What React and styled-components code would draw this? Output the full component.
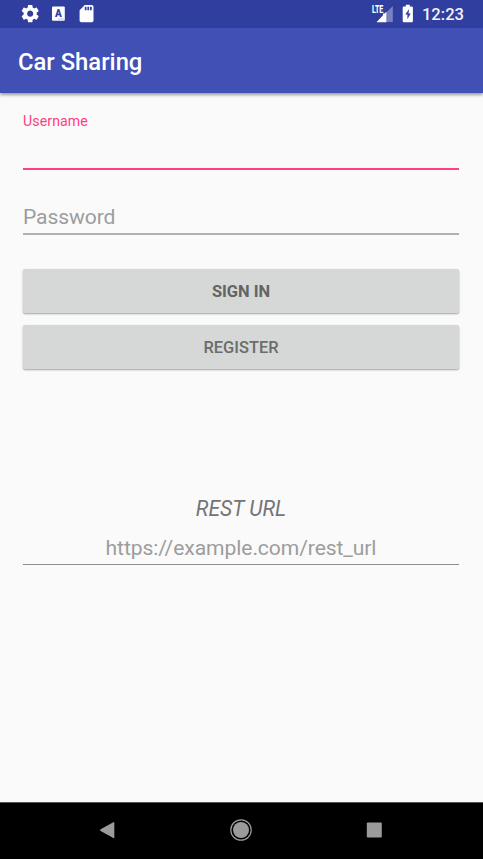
import React from "react";
import styled, { createGlobalStyle } from "styled-components";

const GlobalStyle = createGlobalStyle`
  * { box-sizing: border-box; }
  body { margin: 0; background: #fafafa; }
`;

const Screen = styled.div`
  width: 483px;
  height: 859px;
  display: flex;
  flex-direction: column;
  overflow: hidden;
  background: #fafafa;
  font-family: Roboto, sans-serif;
`;

const StatusBar = styled.header`
  height: 28px;
  flex: none;
  display: flex;
  justify-content: space-between;
  padding: 0 19px 0 20px;
  background: #303f9f;
  color: #fff;
`;

const StatusGroup = styled.div`
  display: flex;
  height: 28px;
`;

const StatusIcon = styled.svg`
  display: block;
  flex: none;
`;

const Clock = styled.time`
  width: 43px;
  margin-left: 5px;
  font-size: 16.6px;
  font-weight: 500;
  line-height: 29px;
  text-align: right;
  white-space: nowrap;
  color: #f1f2fa;
`;

const AppBar = styled.div`
  height: 65px;
  flex: none;
  display: flex;
  align-items: center;
  padding: 3px 18px 0;
  background: #4150b5;
  box-shadow: 0 2px 3px rgba(0, 0, 0, 0.38);
`;

const Title = styled.h1`
  margin: 0;
  font-size: 23.8px;
  font-weight: 500;
  line-height: 28px;
  color: #fff;
`;

const Form = styled.main`
  flex: 1;
  display: flex;
  flex-direction: column;
  padding: 19px 24px 0 23px;
`;

const Field = styled.div`
  display: flex;
  flex-direction: column;
  height: ${(p) => p.$height}px;
  margin-top: ${(p) => p.$top || 0}px;
  border-bottom: ${(p) => p.$line};
`;

const FloatingLabel = styled.label`
  font-size: 14.1px;
  line-height: 18px;
  letter-spacing: 0.12px;
  color: #ff4081;
`;

const Hint = styled.label`
  font-size: 21.1px;
  line-height: 26px;
  letter-spacing: ${(p) => p.$tracking || 0}px;
  text-align: ${(p) => (p.$center ? "center" : "left")};
  color: #9d9d9d;
`;

const Button = styled.button`
  height: 44px;
  flex: none;
  margin: ${(p) => p.$top}px 0 0;
  padding: 1px 0 0;
  border: 0;
  border-radius: 2px;
  background: #d6d7d7;
  box-shadow: 0 1px 2px rgba(0, 0, 0, 0.36);
  font-family: inherit;
  font-size: 16.45px;
  font-weight: ${(p) => (p.$strong ? 700 : 500)};
  color: ${(p) => (p.$strong ? "#636464" : "#6b6c6c")};
`;

const SectionLabel = styled.div`
  margin-top: 126px;
  font-size: 21.1px;
  font-style: italic;
  line-height: 28px;
  text-align: center;
  color: #747474;
`;

const NavBar = styled.nav`
  height: 57px;
  flex: none;
  display: flex;
  align-items: center;
  justify-content: center;
  gap: 109.5px;
  padding: 0 2px 2px 0;
  border-top: 1px solid #555;
  background: #000;
`;

const NavIcon = styled.svg`
  display: block;
  width: 24px;
  height: 24px;
  flex: none;
  fill: #9b9b9b;
`;

const LeftIcons = () => (
  <StatusIcon width="80" height="28" viewBox="20 0 80 28" fill="#fff">
    <g transform="translate(19.75 3.2) scale(0.87)">
      <path d="M19.43 12.98c.04-.32.07-.64.07-.98s-.03-.66-.07-.98l2.11-1.65c.19-.15.24-.42.12-.64l-2-3.46c-.12-.22-.39-.3-.61-.22l-2.49 1c-.52-.4-1.08-.73-1.69-.98l-.38-2.65A.488.488 0 0 0 14 2h-4c-.25 0-.46.18-.49.42l-.38 2.65c-.61.25-1.17.59-1.69.98l-2.49-1c-.23-.09-.49 0-.61.22l-2 3.46c-.13.22-.07.49.12.64l2.11 1.65c-.04.32-.07.65-.07.98s.03.66.07.98l-2.11 1.65c-.19.15-.24.42-.12.64l2 3.46c.12.22.39.3.61.22l2.49-1c.52.4 1.08.73 1.69.98l.38 2.65c.03.24.24.42.49.42h4c.25 0 .46-.18.49-.42l.38-2.65c.61-.25 1.17-.59 1.69-.98l2.49 1c.23.09.49 0 .61-.22l2-3.46c.12-.22.07-.49-.12-.64l-2.11-1.65zM12 15.5c-1.93 0-3.5-1.57-3.5-3.5s1.57-3.5 3.5-3.5 3.5 1.57 3.5 3.5-1.57 3.5-3.5 3.5z" />
    </g>
    <rect x="52" y="6.6" width="12.8" height="14.2" rx="1" />
    <text x="58.3" y="17" fontFamily="Roboto" fontWeight="900" fontSize="10" textAnchor="middle" fill="#303f9f">A</text>
    <path d="M58.5 18.6h1v1h-1zM60.5 18.6h1v1h-1zM62.5 18.6h1v1h-1z" fill="#7d87c2" />
    <g transform="translate(76.1 3.2) scale(0.87)">
      <path d="M18 2h-8L4.02 8 4 20c0 1.1.9 2 2 2h12c1.1 0 2-.9 2-2V4c0-1.1-.9-2-2-2zm-6 6h-2V4h2v4zm3 0h-2V4h2v4zm3 0h-2V4h2v4z" />
    </g>
  </StatusIcon>
);

const RightIcons = () => (
  <StatusIcon width="50" height="28" viewBox="366 0 50 28" fill="#fff">
    <path d="M386.3 12.4 392.8 6v16h-6.5z" fillOpacity=".35" />
    <path d="M376.5 22.2 383 15.2V13.5h1.6l1.8-1.8v10.5z" />
    <text x="371.9" y="13.1" fontFamily="Roboto" fontWeight="800" fontSize="11.2" textLength="11.4" lengthAdjust="spacingAndGlyphs">LTE</text>
    <path fillRule="evenodd" d="M405.8 4.8h4v1.7h1.9q1.2 0 1.2 1.2v13.3q0 1.2-1.2 1.2h-7.8q-1.2 0-1.2-1.2V7.7q0-1.2 1.2-1.2h1.9zM409.2 9l-4 5.6h2.2v4.6l3.3-5.7h-2.2z" />
  </StatusIcon>
);

export default function App() {
  return (
    <>
      <GlobalStyle />
      <Screen>
        <StatusBar>
          <StatusGroup>
            <LeftIcons />
          </StatusGroup>
          <StatusGroup>
            <RightIcons />
            <Clock>12:23</Clock>
          </StatusGroup>
        </StatusBar>
        <AppBar>
          <Title>Car Sharing</Title>
        </AppBar>
        <Form>
          <Field $height={58} $line="2px solid #ff4081">
            <FloatingLabel>Username</FloatingLabel>
          </Field>
          <Field $height={31} $top={34} $line="2px solid #b0b0b0">
            <Hint $tracking={-0.1}>Password</Hint>
          </Field>
          <Button $top={34} $strong>SIGN IN</Button>
          <Button $top={12}>REGISTER</Button>
          <SectionLabel>REST URL</SectionLabel>
          <Field $height={30} $top={12} $line="1px solid #8e8e8e">
            <Hint $center $tracking={-0.09}>https://example.com/rest_url</Hint>
          </Field>
        </Form>
        <NavBar>
          <NavIcon viewBox="0 0 24 24">
            <path d="M5.6 11.2 18.3 4.2q1-.5 1 .6v14.6q0 1.1-1 .6L5.6 13q-1.2-.9 0-1.8z" />
          </NavIcon>
          <NavIcon viewBox="0 0 24 24">
            <circle cx="12" cy="12" r="8" />
            <circle cx="12" cy="12" r="10.2" fill="none" stroke="#9b9b9b" strokeWidth="1.2" />
          </NavIcon>
          <NavIcon viewBox="0 0 24 24">
            <rect x="4.8" y="4.5" width="15" height="15" rx="1" />
          </NavIcon>
        </NavBar>
      </Screen>
    </>
  );
}
